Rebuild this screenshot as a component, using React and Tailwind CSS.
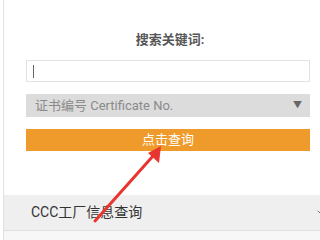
import React from "react";
import { ChevronDown } from "lucide-react";

export default function App() {
  return (
    <div
      className="relative w-[320px] h-[240px] overflow-hidden bg-white"
      style={{ fontFamily: 'Roboto, "Noto Sans CJK SC", sans-serif' }}
    >
      <div className="ml-[3px] h-full border-l border-[#e2e2e2] flex flex-col">
        {/* search form */}
        <div className="pt-[31px] pl-[22px] pr-[10px] flex flex-col">
          <div className="h-[18px] leading-[18px] text-center text-[13px] font-bold text-[#555] pl-[4px]">
            搜索关键词:
          </div>
          <div className="mt-[11px] h-[22px] border border-[#e3e3e3] bg-white flex items-center pl-[6px]">
            <span className="w-px h-[13px] bg-[#666]" />
          </div>
          <div className="mt-[12px] h-[23px] bg-[#dcdcdc] flex items-center justify-between pl-[9px] pr-[8px]">
            <span className="text-[13px] text-[#8a8a8a]">证书编号 Certificate No.</span>
            <span className="text-[9px] text-[#666]">▼</span>
          </div>
          <div className="mt-[12px] h-[22px] bg-[#ef9b2b] flex items-center justify-center">
            <span className="text-[13px] text-white">点击查询</span>
          </div>
        </div>

        {/* section */}
        <div className="mt-[44px] h-[36px] bg-[#efefef] border-b border-[#e0e0e0] flex items-center justify-between pl-[27px] -mr-[10px]">
          <span className="text-[14px] text-[#333]">CCC工厂信息查询</span>
          <ChevronDown size={16} strokeWidth={1.5} className="text-[#777]" />
        </div>
        <div className="flex-1 bg-[#f7f7f7]" />
      </div>

      {/* red annotation arrow */}
      <svg className="absolute left-0 top-0" width="320" height="240" viewBox="0 0 320 240">
        <line x1="95" y1="221" x2="153" y2="156" stroke="#e8352f" strokeWidth="3" strokeLinecap="round" />
        <polygon points="161,146 148,153 159,163" fill="#e8352f" />
      </svg>
    </div>
  );
}
